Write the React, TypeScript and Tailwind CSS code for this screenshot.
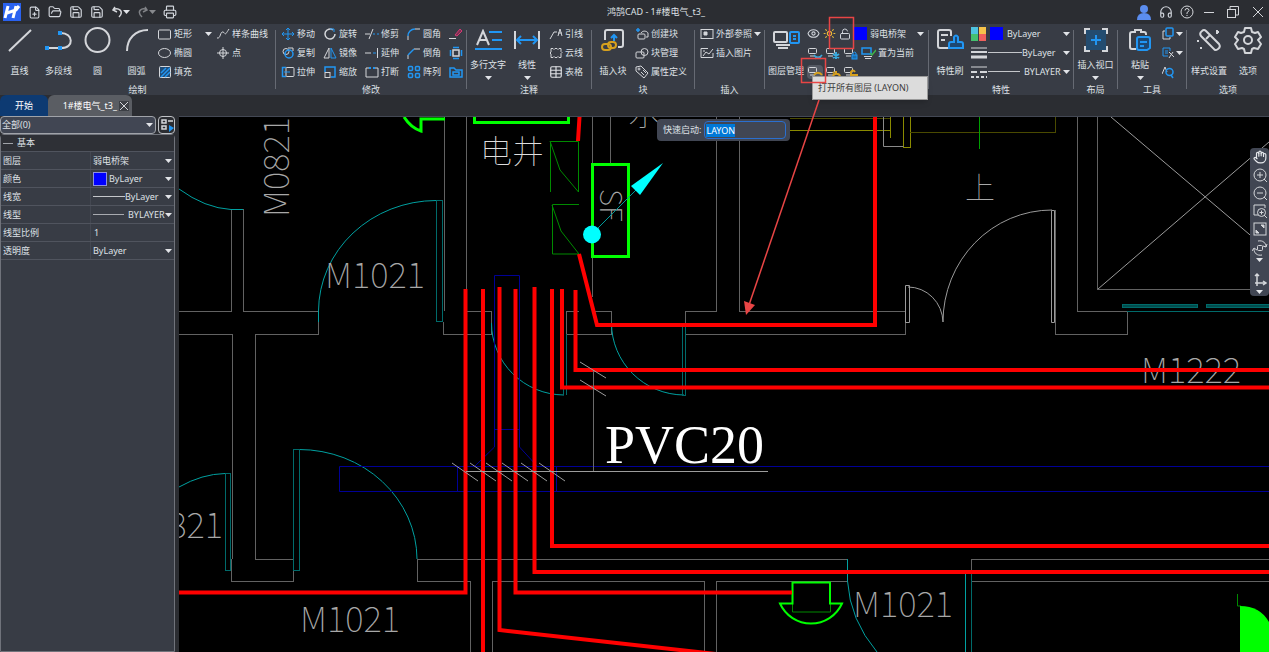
import React, { useEffect, useRef } from 'react';
import { Eye, FilePlus, FolderOpen, Hand, Headphones, LockOpen, Printer, Save, Sun, Table } from 'lucide-react';

const BLUE = '#2196f3';
const GOLD = '#d6a01e';

type DrawProps = { w?: number; h?: number; sw?: number; children: React.ReactNode };

const Draw: React.FC<DrawProps> = ({ w = 14, h = 14, sw = 1, children }) => (
  <svg
    width={w}
    height={h}
    viewBox={`0 0 ${w} ${h}`}
    fill="none"
    stroke="#d4d6da"
    strokeWidth={sw}
    className="shrink-0"
    aria-hidden="true"
  >
    {children}
  </svg>
);

const Caret: React.FC = () => (
  <svg width="7" height="4" viewBox="0 0 7 4" className="shrink-0" aria-hidden="true">
    <path d="M0 0h7L3.500 4z" fill="#e2e4e8" />
  </svg>
);

/* ---------- ribbon building blocks ---------- */

const Sep: React.FC = () => <div className="mt-1.5 h-[59px] w-px shrink-0 bg-[#666a73]" />;

const Group: React.FC<{ label?: string; className: string; children: React.ReactNode }> = ({ label, className, children }) => (
  <section className={`flex flex-col shrink-0 ${className}`}>
    <div className="flex h-[57px]">{children}</div>
    {label && <div className="pt-1 text-center leading-[10px]">{label}</div>}
  </section>
);

const Big: React.FC<{ label: string; className: string; drop?: boolean; children: React.ReactNode }> = ({ label, className, drop, children }) => (
  <button className={`flex shrink-0 flex-col items-center whitespace-nowrap ${className}`}>
    <span className="flex h-8 items-center justify-center">{children}</span>
    <span className={drop ? 'mt-0.5 leading-[14px]' : 'mt-2 leading-[14px]'}>{label}</span>
    {drop && <span className="mt-1"><Caret /></span>}
  </button>
);

const Small: React.FC<{ label?: string; title?: string; drop?: boolean; children: React.ReactNode }> = ({ label, title, drop, children }) => (
  <button className="flex h-[19px] items-center gap-0.5 whitespace-nowrap" aria-label={label ?? title}>
    {children}
    {label && <span>{label}</span>}
    {drop && <span className="ml-auto"><Caret /></span>}
  </button>
);

/* ---------- ribbon groups ---------- */

const DrawGroup = () => (
  <Group label="绘制" className="w-[275px]">
    <Big label="直线" className="w-[39px]">
      <Draw w={26} h={26}><path d="M2 24 24 3" strokeWidth="2" /></Draw>
    </Big>
    <Big label="多段线" className="w-[39px]">
      <Draw w={28} h={26}>
        <path d="M2 21h14c14 0 12-15 0-15" strokeWidth="2" />
        <path d="M0 19h4v4H0zM13 19h4v4h-4zM13 4h4v4h-4z" fill={BLUE} stroke="none" />
      </Draw>
    </Big>
    <Big label="圆" className="w-[39px]">
      <Draw w={28} h={28}><circle cx="13.500" cy="14" r="12" strokeWidth="2" /></Draw>
    </Big>
    <Big label="圆弧" className="w-[39px]">
      <Draw w={26} h={26}><path d="M3 24C3 12 11 3 24 3" strokeWidth="2" /></Draw>
    </Big>
    <div className="mr-1 ml-px flex w-[55px] flex-col">
      <Small label="矩形" drop><Draw w={15}><rect x="1.500" y="3" width="12" height="9" rx="1" /></Draw></Small>
      <Small label="椭圆"><Draw w={15}><ellipse cx="7.500" cy="7" rx="6" ry="4.500" /></Draw></Small>
      <Small label="填充">
        <Draw w={15}>
          <rect x="2.500" y="1.500" width="11" height="11" rx="1" fill="#1f4c78" />
          <path d="M4 8l5-5M4 12l9-9M8 12l5-5" stroke={BLUE} strokeWidth="1.500" />
        </Draw>
      </Small>
    </div>
    <div className="flex flex-col">
      <Small label="样条曲线"><Draw><path d="M1 11c4 1 3-7 6-6s1 5 6-3" /></Draw></Small>
      <Small label="点"><Draw><circle cx="7" cy="7" r="3.500" /><path d="M7 1v12M1 7h12" /></Draw></Small>
    </div>
  </Group>
);

const modifyTools: { label: string; icon: React.ReactNode }[][] = [
  [
    { label: '移动', icon: <path d="M1 7h12M7 1v12M3 5 1 7l2 2M11 5l2 2-2 2M5 3l2-2 2 2M5 11l2 2 2-2" stroke={BLUE} /> },
    { label: '复制', icon: <><circle cx="5" cy="5.500" r="3" /><circle cx="8" cy="8" r="4" stroke={BLUE} strokeWidth="1.500" /><path d="M7 2h5v3" /></> },
    { label: '拉伸', icon: <><path d="M5 2.500H1.500v9H5" stroke={BLUE} strokeWidth="1.500" /><rect x="5" y="2.500" width="8" height="9" rx="1" /><path d="M3 7h6" stroke={BLUE} /></> },
  ],
  [
    { label: '旋转', icon: <><path d="M10 3a5 5 0 1 0 2 4" strokeWidth="1.500" /><path d="M7 2h4v3" stroke={BLUE} /></> },
    { label: '镜像', icon: <><path d="M6 2v10H1z" /><path d="M8 2v10h5z" stroke={BLUE} /></> },
    { label: '缩放', icon: <><path d="M2 7V2h10v10H8" stroke={BLUE} strokeWidth="1.500" /><rect x="2" y="7.500" width="5" height="5" /></> },
  ],
  [
    { label: '修剪', icon: <><path d="M0 7h5M4 12l4-10" /><path d="M8 7h2M12 7h2" stroke={BLUE} /></> },
    { label: '延伸', icon: <><path d="M0 7h6M12.500 2v10" /><path d="M8 7h3" stroke={BLUE} /></> },
    { label: '打断', icon: <><path d="M5 3H1v9h12V3H9" /><path d="M4 3h2M8 3h2" stroke={BLUE} strokeWidth="2" /></> },
  ],
  [
    { label: '圆角', icon: <><path d="M1 13V9M8 2h5" /><path d="M1 9c0-4 3-7 7-7" stroke={BLUE} strokeWidth="1.500" /></> },
    { label: '倒角', icon: <><path d="M1 13V9M7 3h6" /><path d="M1 9l6-6" stroke={BLUE} strokeWidth="1.500" /></> },
    {
      label: '阵列',
      icon: (
        <g stroke={BLUE} strokeWidth="1.500">
          <rect x="1.500" y="1.500" width="4" height="4" rx="1" />
          <rect x="8.500" y="1.500" width="4" height="4" rx="1" />
          <rect x="1.500" y="8.500" width="4" height="4" rx="1" />
          <rect x="8.500" y="8.500" width="4" height="4" rx="1" />
        </g>
      ),
    },
  ],
];

const ModifyGroup = () => (
  <Group label="修改" className="w-[190px]">
    <div className="flex pl-[5px]">
      {modifyTools.map((col) => (
        <div key={col[0].label} className="flex w-[42px] flex-col">
          {col.map((t) => (
            <Small key={t.label} label={t.label}><Draw>{t.icon}</Draw></Small>
          ))}
        </div>
      ))}
      <div className="flex flex-col">
        <Small title="删除"><Draw><path d="M0 11.500h7" /><path d="M6 8l5-6 2 2-5 5z" stroke="#d23a74" fill="#7d2f52" /></Draw></Small>
        <Small title="分解"><Draw><rect x="4" y="4" width="6" height="6" strokeWidth="1.500" /><path d="M4 1.500h6M4 12.500h6M1.500 4v6M12.500 4v6" stroke={BLUE} strokeWidth="1.500" /></Draw></Small>
        <Small title="组"><Draw><path d="M1 12V3h4l2 2h6v7zM4 10V7h6v3z" stroke={BLUE} strokeWidth="1.500" /></Draw></Small>
      </div>
    </div>
  </Group>
);

const NoteGroup = () => (
  <Group label="注释" className="w-[124px]">
    <Big label="多行文字" className="w-[42px]" drop>
      <Draw w={28} h={22} sw={2}>
        <path d="M3 16 9 2l6 14M5 11h8" />
        <path d="M15 3h13M18 11h10M1 20h27" stroke={BLUE} />
      </Draw>
    </Big>
    <Big label="线性" className="w-9" drop>
      <Draw w={28} h={22} sw={2}>
        <path d="M2 2v18M26 2v18" />
        <path d="M5 11h18M8 7l-4 4 4 4M20 7l4 4-4 4" stroke={BLUE} />
      </Draw>
    </Big>
    <div className="ml-1 flex flex-col">
      <Small label="引线"><Draw><path d="M1 12l4-7h3M9 9l2-7 2 7M9 6h4" /></Draw></Small>
      <Small label="云线"><Draw><path d="M2 2.500h2l1 1 1-1h2l1 1 1-1h2v3l1 1-1 1v4h-2l-1-1-1 1H6l-1-1-1 1H2V8L1 7l1-1z" /></Draw></Small>
      <Small label="表格"><Table size={14} strokeWidth={2} /></Small>
    </div>
  </Group>
);

const BlockGroup = () => (
  <Group label="块" className="w-[102px]">
    <Big label="插入块" className="w-[42px]">
      <Draw w={26} h={26}>
        <path d="M5 13V5q0-2 2-2h14q2 0 2 2v13q0 2-2 2h-3" strokeWidth="2" />
        <path d="M14 14V9M11 11l3-3 3 3" stroke={BLUE} strokeWidth="2" />
        <rect x="2" y="17" width="9" height="6" rx="3" stroke={GOLD} strokeWidth="2" />
        <rect x="8" y="15" width="8" height="6" rx="3" stroke={GOLD} strokeWidth="2" />
      </Draw>
    </Big>
    <div className="ml-px flex flex-col">
      <Small label="创建块"><Draw><path d="M3 1v4M1 3h4" stroke={BLUE} strokeWidth="1.500" /><rect x="3" y="7" width="7" height="5" rx="1" /><path d="M6 6c2-3 6-2 7 0v4h-2" /></Draw></Small>
      <Small label="块管理"><Draw><rect x="1" y="6" width="8" height="6" rx="1" /><circle cx="9.500" cy="6" r="3.500" /></Draw></Small>
      <Small label="属性定义"><Draw><path d="M1 2l5-1 7 7-4 5-8-7z" /><circle cx="4" cy="4" r="1" /><path d="M6 7l3 3M8 5l3 3" /></Draw></Small>
    </div>
  </Group>
);

const InsertGroup = () => (
  <Group label="插入" className="w-[69px]">
    <div className="ml-[5px] flex flex-col items-start">
      <Small label="外部参照" drop><Draw><rect x="1" y="2.500" width="12" height="9" /><path d="M4 5h3v3H4z" fill="#d4d6da" /></Draw></Small>
      <Small label="插入图片"><Draw><path d="M8 2.500H1v9h12V7" /><path d="M3 10l3-4 3 2 4-5M3 5h2" /></Draw></Small>
    </div>
  </Group>
);

const LayerIcon: React.FC<{ children?: React.ReactNode }> = ({ children }) => (
  <Draw w={16}>
    <rect x="1.500" y="2.500" width="8" height="5" rx="1" />
    <path d="M3 10h5" />
    {children}
  </Draw>
);

// The open tooltip covers this group's caption row.
const LayerGroup = () => (
  <Group className="relative w-[163px]">
    <Big label="图层管理" className="w-[42px]">
      <Draw w={28} h={22} sw={2}>
        <rect x="2" y="3" width="13" height="10" rx="1" />
        <path d="M4 16h14M6 19h10" />
        <rect x="18" y="3" width="9" height="11" rx="1" stroke={BLUE} />
        <path d="M21 7h3M21 10h3" stroke={BLUE} />
      </Draw>
    </Big>
    <div className="flex flex-1 flex-col">
      <div className="flex h-[19px] items-center gap-[3px] pr-1">
        <Eye size={13} strokeWidth={2} className="shrink-0 text-gray-300" />
        <Sun size={13} strokeWidth={2} className="shrink-0 text-[#e8b93a]" />
        <LockOpen size={12} strokeWidth={2} className="shrink-0 text-gray-300" />
        <span className="size-[13px] shrink-0 bg-[#0000ff]" />
        <select aria-label="当前图层" className="min-w-0 flex-1 appearance-none bg-transparent outline-none">
          <option>弱电桥架</option>
        </select>
        <Caret />
      </div>
      <div className="flex h-[19px] items-center gap-0.5">
        <button aria-label="关闭图层"><LayerIcon><path d="M7 9c2 3 6 3 8 0M9 11l-1 2M13 11l1 2" stroke="#39a9dc" strokeWidth="1.500" /></LayerIcon></button>
        <button aria-label="冻结图层"><LayerIcon><path d="M11 6v7M8 8l6 4M14 8l-6 4" stroke="#39a9dc" strokeWidth="2" /></LayerIcon></button>
        <button aria-label="锁定图层"><LayerIcon><rect x="9" y="9" width="5" height="4" fill="#1c6fae" stroke={BLUE} /><path d="M10 9V7q2-2 3 0v2" stroke={BLUE} /></LayerIcon></button>
        <button className="flex items-center gap-0.5">
          <Draw w={15}><rect x="1" y="2" width="9" height="6" stroke={BLUE} strokeWidth="1.500" /><path d="M3 10.500h8M4 12.500h6" /><path d="M9 7l2 2 4-5" stroke="#3cb54a" strokeWidth="1.500" /></Draw>
          <span>置为当前</span>
        </button>
      </div>
      <div className="flex h-[19px] items-center gap-0.5">
        <button aria-label="打开所有图层" className="rounded-sm bg-[#555963]"><LayerIcon><path d="M7 10c2-3 6-3 8 0" stroke={GOLD} strokeWidth="2" /></LayerIcon></button>
        <button aria-label="解冻所有图层"><LayerIcon><path d="M8 11c1-3 6-3 7 0M11 6v2M8 7l1 1" stroke={GOLD} strokeWidth="2" /></LayerIcon></button>
        <button aria-label="解锁图层"><LayerIcon><path d="M8 11V7q2-3 4 0M9 10h5v3" stroke={GOLD} strokeWidth="2" /></LayerIcon></button>
      </div>
    </div>
    <div role="tooltip" className="absolute top-[52px] left-[47px] z-20 w-[116px] border border-[#9a9a9a] bg-[#dcdcdc] px-[5px] py-1 leading-[14px] whitespace-nowrap text-[#3c3c3c] shadow-md">
      打开所有图层 (LAYON)
    </div>
  </Group>
);

const PropGroup = () => (
  <Group label="特性" className="w-[144px]">
    <Big label="特性刷" className="w-[42px]">
      <Draw w={28} h={24} sw={2}>
        <path d="M12 20H4q-2 0-2-2V4q0-2 2-2h9q2 0 2 2v4M5 7h7M5 12h4" />
        <path d="M13 20v-4q0-2 2-2h3V9q2-3 4 0v5h3q2 0 2 2v4z" stroke={BLUE} fill="#1d4873" />
      </Draw>
    </Big>
    <div className="flex flex-1 flex-col pr-[3px]">
      <div className="flex h-[19px] items-center gap-1">
        <svg width="15" height="14" viewBox="0 0 15 14" aria-hidden="true" className="shrink-0">
          <path d="M0 0h7v7H0z" fill="#4ec3e0" />
          <path d="M8 0h7v7H8z" fill="#f6c34a" />
          <path d="M0 7h7v7H0z" fill="#45c06f" />
          <path d="M8 7h7v7H8z" fill="#f0605c" />
        </svg>
        <span className="size-[13px] shrink-0 bg-[#0000ff]" />
        <select aria-label="颜色" className="min-w-0 flex-1 appearance-none bg-transparent outline-none"><option>ByLayer</option></select>
        <Caret />
      </div>
      <div className="flex h-[19px] items-center">
        <Draw w={17}><path d="M0 2h16" /><path d="M0 6h16" strokeWidth="2" /><path d="M0 11h16" strokeWidth="3" /></Draw>
        <span className="h-px w-[34px] shrink-0 bg-[#c4c6ca]" />
        <select aria-label="线宽" className="min-w-0 flex-1 appearance-none bg-transparent outline-none"><option>ByLayer</option></select>
        <Caret />
      </div>
      <div className="flex h-[19px] items-center">
        <Draw w={17}><path d="M0 2h16" /><path d="M0 7h6M9 7h7" strokeWidth="2" /><path d="M0 12h16" strokeWidth="2" strokeDasharray="3 2" /></Draw>
        <span className="mr-1 h-px w-8 shrink-0 bg-[#c4c6ca]" />
        <select aria-label="线型" className="min-w-0 flex-1 appearance-none bg-transparent outline-none"><option>BYLAYER</option></select>
        <Caret />
      </div>
    </div>
  </Group>
);

const ToolGroups = () => (
  <>
    <Group label="布局" className="w-[43px]">
      <Big label="插入视口" className="w-full" drop>
        <Draw w={24} h={24} sw={2}>
          <rect x="2" y="2" width="20" height="20" fill="#234c70" stroke="none" />
          <path d="M1 6V1h5M18 1h5v5M23 18v5h-5M6 23H1v-5" />
          <path d="M12 7v10M7 12h10" stroke={BLUE} />
        </Draw>
      </Big>
    </Group>
    <Sep />
    <Group label="工具" className="w-[68px]">
      <Big label="粘贴" className="w-11" drop>
        <Draw w={24} h={24} sw={2}>
          <path d="M8 21H4q-2 0-2-2V6q0-2 2-2h3V2h6v2h3q2 0 2 2v1" />
          <path d="M11 9h9q2 0 2 2v9l-3 2h-8q-2 0-2-2v-9q0-2 2-2z" stroke={BLUE} fill="#1d4873" />
          <path d="M12 14h7M12 18h4" stroke={BLUE} />
        </Draw>
      </Big>
      <div className="flex flex-col">
        <Small title="复制" drop><Draw w={12}><rect x="4" y="1" width="7" height="8" rx="1" stroke={BLUE} strokeWidth="1.500" /><path d="M3 4H1v8h7v-2" /></Draw></Small>
        <Small title="剪切" drop><Draw w={12}><path d="M6 10H1V2h7v3M3 5h3M3 7h3" stroke={BLUE} /><path d="M7 6l5 5M11 6l-4 6" /></Draw></Small>
        <Small title="查找"><Draw w={12}><path d="M0 9l3-7 2 5" /><circle cx="7.500" cy="7" r="3.500" stroke={BLUE} strokeWidth="1.500" /><path d="M9 10l2 3" stroke={BLUE} strokeWidth="1.500" /></Draw></Small>
      </div>
    </Group>
    <Sep />
    <Group label="选项" className="min-w-[82px] flex-1">
      <Big label="样式设置" className="w-11">
        <Draw w={26} h={26} sw={2}>
          <path d="M6 4q2-2 4 0l13 13q2 3-1 5t-4 0L5 9Q3 6 6 4zM10 12l4-4" />
          <path d="M20 5h3M21 3v4M1 14h2M4 21h2" />
        </Draw>
      </Big>
      <Big label="选项" className="w-[34px]">
        <Draw w={28} h={28} sw={2}>
          <path d="M11 2h6l1 4 3 1 3-1 3 5-3 3 3 4-3 5-4-1-2 1-1 4h-6l-1-4-2-1-4 1-3-5 3-4-3-3 3-5 3 1 3-1z" strokeLinejoin="round" />
          <circle cx="14" cy="14" r="4" />
        </Draw>
      </Big>
    </Group>
  </>
);

/* ---------- chrome ---------- */

const TitleBar = () => (
  <header className="flex h-6 items-center bg-[#2b2d32]">
    <div className="flex flex-1 items-center gap-[7px] pl-[3px] text-gray-300">
      <svg width="18" height="18" viewBox="0 0 18 18" aria-label="logo">
        <rect width="18" height="18" fill="#2a62f0" />
        <path d="M5 3 2 15M13 3l-3 12M4 10l9-3 3-4" stroke="#fff" strokeWidth="3" fill="none" />
      </svg>
      <button aria-label="新建"><FilePlus size={13} /></button>
      <button aria-label="打开"><FolderOpen size={14} /></button>
      <button aria-label="保存"><Save size={14} /></button>
      <button aria-label="另存为"><Save size={14} /></button>
      <button aria-label="撤销" className="flex items-center">
        <Draw w={12}><path d="M4 2 2 5l4 2M2 5c5-3 12 1 6 7" strokeWidth="1.500" /></Draw>
        <Caret />
      </button>
      <button aria-label="重做" className="flex items-center opacity-50">
        <Draw w={12}><path d="M8 2l2 3-4 2M10 5C5 2-1 6 5 12" strokeWidth="1.500" /></Draw>
        <Caret />
      </button>
      <button aria-label="打印"><Printer size={14} /></button>
    </div>
    <h1 className="ml-11">鸿鹄CAD - 1#楼电气_t3_</h1>
    <div className="flex flex-1 items-center justify-end gap-[7px] pr-1">
      <button aria-label="用户" className="mr-px">
        <svg width="14" height="15" viewBox="0 0 14 15"><circle cx="7" cy="4" r="4" fill="#5b8def" /><path d="M0 15q0-7 7-7t7 7z" fill="#5b8def" /></svg>
      </button>
      <button aria-label="客服"><Headphones size={14} className="text-gray-300" /></button>
      <button aria-label="帮助"><Draw><circle cx="7" cy="7" r="6" /><path d="M5 5.500q0-2 2-2t2 2q0 1-2 2V9M7 10v1" /></Draw></button>
      <button aria-label="最小化" className="ml-0.5"><Draw w={12}><path d="M1 7.500h10" /></Draw></button>
      <button aria-label="还原" className="ml-1"><Draw w={14}><rect x="1.500" y="4.500" width="8" height="8" /><path d="M4 4V1.500h8.500V10H10" /></Draw></button>
      <button aria-label="关闭" className="ml-1"><Draw w={14}><path d="M2 2l10 10M12 2 2 12" /></Draw></button>
    </div>
  </header>
);

const FileTabs = () => (
  <nav className="flex h-[21px] bg-[#2b2d32]">
    <button className="w-12 rounded-t-md bg-[#0d3a72] text-white">开始</button>
    <button className="flex w-[84px] items-center justify-end gap-0.5 rounded-t-md bg-[#5a5d63] pr-[3px] text-white">
      1#楼电气_t3_
      <Draw w={10} h={10}><rect width="10" height="10" fill="#3c3f45" stroke="none" /><path d="M1 1l8 8M9 1 1 9" /></Draw>
    </button>
  </nav>
);

const Row: React.FC<{ label: string; id: string; children: React.ReactNode }> = ({ label, id, children }) => (
  <div className="flex h-[18px] items-center border-b border-[#50545e]">
    <label htmlFor={id} className="w-[89px] shrink-0 pl-0.5">{label}</label>
    <div className="flex h-full min-w-0 flex-1 items-center border-l border-[#444852] pr-0.5 pl-0.5">{children}</div>
  </div>
);

const rowSelect = 'min-w-0 flex-1 appearance-none bg-transparent outline-none';

const PropertyPanel = () => (
  <aside className="flex w-[179px] shrink-0 flex-col bg-[#2b2d32]">
    <div className="flex gap-0.5 pr-1">
      <div className="flex h-[18px] min-w-0 flex-1 items-center rounded-sm border border-[#a0a3a9] bg-[#414653] pr-0.5 pl-px">
        <select aria-label="选择集" className={rowSelect}><option>全部(0)</option></select>
        <Caret />
      </div>
      <button aria-label="快速选择" className="flex h-[18px] w-[17px] items-center justify-center rounded-sm border border-[#c0c2c6]">
        <Draw><path d="M2 2h4v3H2zM2 8h4v3H2zM8 3h5" strokeWidth="1.500" /><path d="M9 7v7l5-4z" fill={BLUE} stroke="none" /></Draw>
      </button>
    </div>
    <div className="mr-1 flex-1 rounded-t-sm border border-[#70737b] bg-[#383c45]">
      <h2 className="flex h-[17px] items-center gap-1 border-b border-[#50545e] bg-[#2e3036] pl-0.5">
        <span className="h-px w-[10px] bg-[#a0a3a9]" />
        基本
      </h2>
      <Row label="图层" id="layer"><select id="layer" className={rowSelect}><option>弱电桥架</option></select><Caret /></Row>
      <Row label="颜色" id="color">
        <span className="mr-0.5 size-[14px] border border-[#8d8fe0] bg-[#0000ff]" />
        <select id="color" className={rowSelect}><option>ByLayer</option></select><Caret />
      </Row>
      <Row label="线宽" id="weight">
        <span className="h-px w-8 bg-[#c4c6ca]" />
        <select id="weight" className={rowSelect}><option>ByLayer</option></select><Caret />
      </Row>
      <Row label="线型" id="ltype">
        <span className="mr-1 h-px w-[31px] bg-[#a8aab0]" />
        <select id="ltype" className={rowSelect}><option>BYLAYER</option></select><Caret />
      </Row>
      <Row label="线型比例" id="scale"><input id="scale" defaultValue="1" className="w-full bg-transparent pl-px outline-none" /></Row>
      <Row label="透明度" id="alpha"><select id="alpha" className={rowSelect}><option>ByLayer</option></select><Caret /></Row>
    </div>
  </aside>
);

/* ---------- floor plan ---------- */

const redRuns = [
  'M465.500 289V592.500H179',
  'M483 289V652',
  'M499.500 287V630L716 654',
  'M515.500 289V592.500H792',
  'M534.500 287V572H1269',
  'M552 289V546H1269',
  'M562 289V387.500H1269',
  'M575.500 290V370H1269',
  'M579.500 117 578 141',
  'M579 254 597 325H875V117',
];

const doorLabels = [
  { x: 325, y: 288, t: 'M1021' },
  { x: 300, y: 632, t: 'M1021' },
  { x: 853, y: 617, t: 'M1021' },
  { x: 1141, y: 383, t: 'M1222' },
];

const FloorPlan = () => (
  <svg viewBox="179 117 1090 535" preserveAspectRatio="xMinYMin slice" className="absolute inset-0 size-full" fill="none" aria-label="楼层平面图">
    <g stroke="#626262" shapeRendering="crispEdges">
      <path d="M231.500 209V311H179M243.500 209V311H318.500V334H255.500V559H293.500V581H231.500V559M179 334H232.500V559" />
      <path d="M444.500 117V311M443.500 322V334H491.500V311H466.500V117" />
      <path d="M579 311H566.500V334H611.500V311H595M592.500 117V297M610.500 117V163" />
      <path d="M716.500 117V311H685.500V334H905.500V311H739.500V117" />
      <path d="M1055.500 210V334H1127.500V311H1077.500V117M1097.500 117V289H1269" />
      <path d="M417.500 559H847.500V581H716.500V652M417.500 559V581H470.500V652M492.500 652V581H704.500V652" />
      <path d="M1269 559H971.500V581H1269" />
    </g>
    <g stroke="#9a9a9a">
      <path d="M1111 117 1269 251M1098 289 1269 142" />
      <path d="M1052 210A109 112 0 0 0 943 322A35 36 0 0 0 908 287M1051.500 210.500h3v112h-3zM905.500 285.500h4v37h-4z" />
    </g>
    <g stroke="#00a0a0">
      <path d="M179 189Q205 208 231 209.500H243" />
      <path d="M318.500 322V311A118 111 0 0 1 436 200.500" />
      <path d="M491.500 323A73 72 0 0 0 564 395M611.500 323A73 72 0 0 0 684 395" />
      <path d="M179 487Q202 474 225 473.500M299 449.500A118 110 0 0 1 417 559" />
      <path d="M847.500 559V581Q850 620 877 652M965.500 572V652" />
    </g>
    <g stroke="#006a6a" shapeRendering="crispEdges">
      <path d="M436.500 200.500h6v121h-6zM563.500 334v61M566.500 334v61M682.500 325v70h3v-70" />
      <path d="M225.500 473.500h5v97h-5zM293.500 449.500h6v121h-6zM971.500 572v80M1127 311.500h142" />
      <path d="M1122 304.500h75v3h-75zM1206 304.500h70v3h-70z" fill="#004d4d" />
    </g>
    <g stroke="#000096">
      <path d="M494.500 447V275.500H519.500V447L537 466M494.500 447 475 466M494 429.500h25" />
      <path d="M1269 466.500H339.500V491.500H1269M457.500 466v25M556.500 466v25" />
    </g>
    <g stroke="#8a8a00" shapeRendering="crispEdges">
      <path d="M790 130.500H890.500V117M890.500 130v8M903.500 117v30h7v-30" />
      <path d="M910 132.500h145V117M790 118.500h100" stroke="#4a4a00" />
    </g>
    <path d="M883.500 117v29.500h20" stroke="#8a8a8a" />
    <path d="M979.500 117v32" stroke="#00a000" />
    <g stroke="#008a00">
      <path d="M550.500 192V141.500H578.500V192L560 170 550 141" />
      <path d="M579 204.500H552.500V254H579L561 231 552 205" />
      <path d="M792.500 603V612H830.500V603M1237.500 594V606H1241" />
    </g>

    <g fontFamily='"Noto Sans CJK SC", sans-serif' fontWeight="100" fill="#a8a8a8">
      <g fontSize="35">
        {doorLabels.map((l) => (
          <text key={`${l.x}-${l.y}`} x={l.x} y={l.y}>{l.t}</text>
        ))}
        <text x="223" y="538" textAnchor="end">M0821</text>
        <text transform="translate(289 217) rotate(-90)">M0821</text>
      </g>
      <text x="628" y="125" fontSize="34">水</text>
      <text x="965" y="198" fontSize="30">上</text>
      <text x="480" y="163" fontSize="32" fill="#dddddd">电井</text>
      <text transform="translate(600 189) rotate(90)" fontSize="30">SF</text>
    </g>

    <g stroke="#00ff00" strokeWidth="3">
      <path d="M404 117Q411 128 421 131V119H445" />
      <path d="M474.500 117V122.500H568.500V117" />
      <rect x="592.500" y="164.500" width="36" height="92" />
      <path d="M792.500 603.500H780A34 34 0 0 0 842 603.500H830V582.500H792.500Z" strokeWidth="2" />
      {/* lamp body is open at the bottom */}
      <path d="M794 603.500h35" stroke="#000000" />
    </g>
    <path d="M1240 606Q1260 606 1269 622V652H1240z" fill="#00ff00" />

    <g stroke="#ff0000" strokeWidth="4">
      {redRuns.map((d) => <path key={d} d={d} />)}
    </g>

    <path d="M598 228 637 189" stroke="#009a9a" />
    <circle cx="592" cy="234.500" r="9" fill="#00ffff" />
    <path d="M663 163 631 186 640 195z" fill="#00ffff" />

    <g stroke="#9c9c9c">
      <path d="M593.500 370V471" stroke="#6a6a6a" />
      <path d="M466 471.500H768" />
      {[465, 483, 499, 515, 534, 552].map((x) => <path key={x} d={`M${x - 13} 463l26 18`} />)}
      <path d="M580 362l26 16M580 380l26 16" />
    </g>
    <text x="605" y="463" fontSize="54" fontFamily='"Liberation Serif", serif' fill="#ffffff">PVC20</text>
  </svg>
);

const QuickLaunch = () => {
  const ref = useRef<HTMLInputElement>(null);

  useEffect(() => {
    ref.current?.focus();
    ref.current?.select();
  }, []);

  return (
    <div className="absolute top-0.5 left-[478px] flex w-[133px] items-center gap-[3px] rounded-sm bg-[#414653] py-0.5 pr-1 pl-1.5">
      <label htmlFor="quick" className="whitespace-nowrap">快速启动:</label>
      <input
        id="quick"
        ref={ref}
        defaultValue="LAYON"
        className="h-[18px] min-w-0 flex-1 rounded-sm border border-[#2a6fd0] bg-[#414653] px-px outline-none selection:bg-[#0078d7] selection:text-white"
      />
    </div>
  );
};

const ViewTools = () => (
  <div className="absolute top-[31px] right-0 flex w-[19px] flex-col items-center gap-1 rounded-sm bg-[#414653] py-0.5 text-gray-200">
    <button aria-label="平移"><Hand size={14} strokeWidth={2} /></button>
    <button aria-label="放大"><Draw><circle cx="7" cy="7" r="6" /><path d="M4 7h6M7 4v6M11 11l3 3" /></Draw></button>
    <button aria-label="缩小"><Draw><circle cx="7" cy="7" r="6" /><path d="M4 7h6M11 11l3 3" /></Draw></button>
    <button aria-label="窗口缩放"><Draw><path d="M5 11H1V1h11v3" /><circle cx="8.500" cy="8.500" r="4" /><path d="M6.500 8.500h4M8.500 6.500v4M11 11l3 3" /></Draw></button>
    <button aria-label="范围缩放"><Draw><rect x="1" y="1" width="12" height="12" /><path d="M8 3h3v3zM3 8v3h3z" fill="#d4d6da" /></Draw></button>
    <button aria-label="动态观察" className="flex flex-col items-center gap-0.5">
      <Draw w={16} h={16}><rect x="5.500" y="5.500" width="5" height="5" rx="1" /><path d="M6 1c5-1 8 2 8 6M15 4l-1 3-3-1M10 15c-5 1-8-2-8-6M0 11l2-3 3 2" /></Draw>
      <Caret />
    </button>
    <button aria-label="坐标系" className="mt-1.5 flex flex-col items-center gap-0.5">
      <Draw w={14} h={16}><path d="M4 14V2M2 4l2-2 2 2M2 11h11M10 9l3 2-3 2" strokeWidth="1.500" /></Draw>
      <Caret />
    </button>
  </div>
);

const Callouts = () => (
  <svg className="pointer-events-none absolute inset-0 z-30 size-full" fill="none" stroke="#e84545" aria-hidden="true">
    <rect x="829.500" y="17.500" width="24" height="31" strokeWidth="1.500" />
    <rect x="801.500" y="58.500" width="24" height="24" strokeWidth="1.500" />
    <path d="M819 100 749 305" strokeWidth="1.500" />
    <path d="M746 315 744 301 755 305z" fill="#e84545" stroke="none" />
  </svg>
);

const App: React.FC = () => (
  <div className='relative flex h-screen flex-col overflow-hidden bg-[#2b2d32] font-["Noto_Sans","Noto_Sans_CJK_SC",sans-serif] text-[9px] leading-[14px] text-[#dfe1e5]'>
    <TitleBar />
    <div className="flex h-[71px] bg-[#383c45]">
      <DrawGroup />
      <Sep />
      <ModifyGroup />
      <Sep />
      <NoteGroup />
      <Sep />
      <BlockGroup />
      <Sep />
      <InsertGroup />
      <Sep />
      <LayerGroup />
      <Sep />
      <PropGroup />
      <Sep />
      <ToolGroups />
    </div>
    <FileTabs />
    <div className="flex min-h-0 flex-1">
      <PropertyPanel />
      <main className="flex min-w-0 flex-1 flex-col border-t border-[#434854] bg-black">
        <div className="relative flex-1">
          <FloorPlan />
          <QuickLaunch />
          <ViewTools />
        </div>
      </main>
    </div>
    <Callouts />
  </div>
);

export default App;
